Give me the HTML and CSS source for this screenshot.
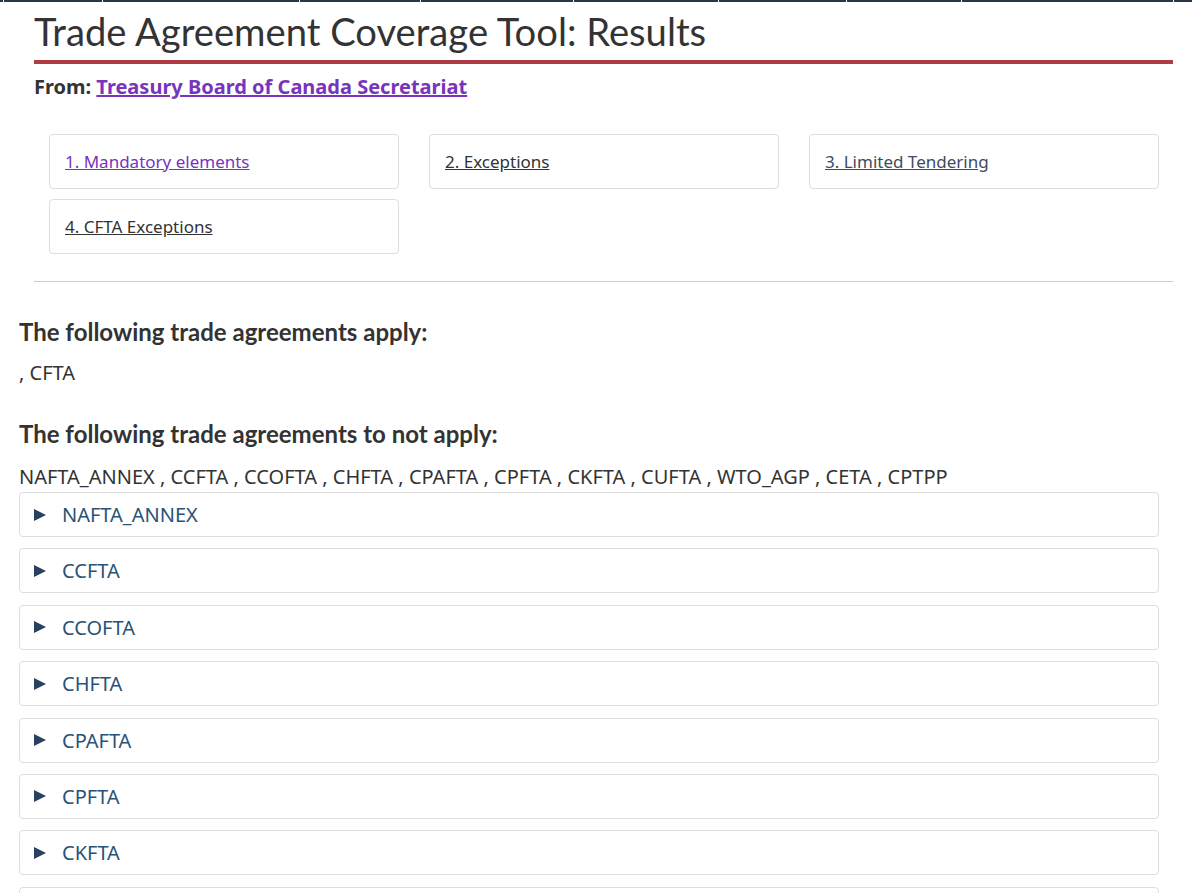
FILE: index.html
```html
<!DOCTYPE html>
<html lang="en">
<head>
<meta charset="utf-8">
<title>Trade Agreement Coverage Tool: Results</title>
<link rel="stylesheet" href="styles.css">
</head>
<body>
<div class="topbar">
  <span class="seg" style="width:3px"></span>
  <span class="seg" style="width:98px"></span>
  <span class="seg" style="width:196px"></span>
  <span class="seg" style="width:120px"></span>
  <span class="seg" style="width:152px"></span>
  <span class="seg" style="width:144px"></span>
  <span class="seg" style="width:127px"></span>
  <span class="seg" style="width:114px"></span>
  <span class="seg" style="width:211px"></span>
  <span class="seg grow"></span>
</div>
<header class="page-head">
  <h1 class="title">Trade Agreement Coverage Tool: Results</h1>
  <p class="from"><strong>From:</strong> <a class="visited" href="#">Treasury Board of Canada Secretariat</a></p>
  <nav class="steps">
    <a class="step visited" href="#">1. Mandatory elements</a>
    <a class="step" href="#">2. Exceptions</a>
    <a class="step blue" href="#">3. Limited Tendering</a>
    <a class="step" href="#">4. CFTA Exceptions</a>
  </nav>
  <hr class="rule">
</header>
<main class="results">
  <h2 class="sub">The following trade agreements apply:</h2>
  <p class="list">, CFTA</p>
  <h2 class="sub second">The following trade agreements to not apply:</h2>
  <p class="list tight">NAFTA_ANNEX , CCFTA , CCOFTA , CHFTA , CPAFTA , CPFTA , CKFTA , CUFTA , WTO_AGP , CETA , CPTPP</p>
  <details class="agr"><summary>NAFTA_ANNEX</summary></details>
  <details class="agr"><summary>CCFTA</summary></details>
  <details class="agr"><summary>CCOFTA</summary></details>
  <details class="agr"><summary>CHFTA</summary></details>
  <details class="agr"><summary>CPAFTA</summary></details>
  <details class="agr"><summary>CPFTA</summary></details>
  <details class="agr"><summary>CKFTA</summary></details>
  <details class="agr"><summary>CUFTA</summary></details>
  <details class="agr"><summary>WTO_AGP</summary></details>
  <details class="agr"><summary>CETA</summary></details>
  <details class="agr"><summary>CPTPP</summary></details>
</main>
</body>
</html>
```
FILE: styles.css
```css
html, body {
  margin: 0;
  padding: 0;
  background: #fff;
}
body {
  font-family: "Noto Sans", "Liberation Sans", sans-serif;
  color: #333;
}
.topbar {
  display: flex;
  gap: 1px;
  height: 2px;
}
.seg {
  display: block;
  height: 2px;
  background: #26374a;
}
.seg.grow { flex: 1; }

.page-head {
  width: 1139px;
  margin-left: 34px;
}
.title {
  font-family: Lato, "Liberation Sans", sans-serif;
  font-weight: 400;
  font-size: 38.2px;
  line-height: 42px;
  color: #333;
  margin: 8px 0 0;
  padding-bottom: 8px;
  border-bottom: 4px solid #af3c43;
}
.from {
  margin: 9px 0 0;
  font-size: 20px;
  line-height: 27px;
}
.from strong { font-weight: 700; }
.from a {
  font-weight: 700;
}
a { color: #333; }
a.visited { color: #7834bc; }
a.blue { color: #3d4c5e; }

.steps {
  display: grid;
  grid-template-columns: repeat(3, 350px);
  column-gap: 30px;
  row-gap: 10px;
  margin: 34px 0 0 15px;
}
.step {
  display: block;
  height: 55px;
  box-sizing: border-box;
  border: 1px solid #ddd;
  border-radius: 4px;
  padding: 15px 15px 0;
  font-size: 17px;
  line-height: 23px;
}
.rule {
  border: 0;
  border-top: 1px solid #ccc;
  margin: 27px 0 0;
  height: 0;
}

.results {
  width: 1140px;
  margin-left: 19px;
  padding-bottom: 40px;
}
.sub {
  font-family: Lato, "Liberation Sans", sans-serif;
  font-weight: 700;
  font-size: 24px;
  line-height: 30px;
  color: #333;
  margin: 35px 0 0;
}
.sub.second { margin-top: 33px; }
.list {
  margin: 12px 0 0;
  font-size: 20px;
  line-height: 27px;
}
.list.tight { margin-top: 14px; }
.agr {
  border: 1px solid #ddd;
  border-radius: 4px;
  margin-top: 0;
  margin-bottom: 11.4px;
}
.list.tight + .agr { margin-top: 2px; }
.agr summary {
  display: flex;
  align-items: center;
  height: 43px;
  padding-left: 14px;
  font-size: 20px;
  color: #295376;
  list-style: none;
  cursor: pointer;
}
.agr summary::-webkit-details-marker { display: none; }
.agr summary::before {
  content: "";
  width: 0;
  height: 0;
  border-top: 6.5px solid transparent;
  border-bottom: 6.5px solid transparent;
  border-left: 12px solid #284162;
  margin-right: 16px;
}
```
